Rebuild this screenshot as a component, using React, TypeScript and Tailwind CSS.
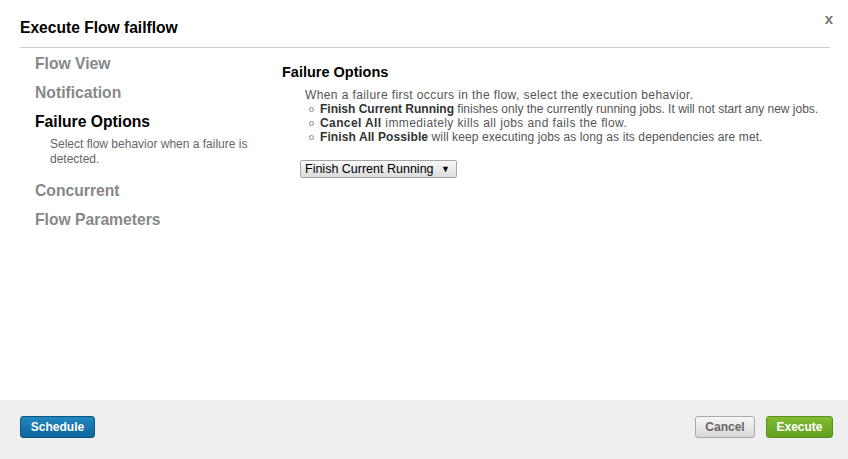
import React from "react";

const font = { fontFamily: '"Liberation Sans", Arial, Helvetica, sans-serif' };

function NavItem({ label, active }: { label: string; active?: boolean }) {
  return (
    <div
      className={`h-[20px] leading-[20px] text-[15.7px] font-bold whitespace-nowrap ${
        active ? "text-black" : "text-[#888888]"
      }`}
    >
      {label}
    </div>
  );
}

function Bullet({ bold, rest, track }: { bold: string; rest: string; track: string }) {
  return (
    <li className="flex items-center h-[14px] whitespace-nowrap">
      <span className="ml-[4px] mr-[6px] inline-block w-[5px] h-[5px] rounded-full border border-[#888]" />
      <span className={track}>
        <b className="font-bold text-[#333]">{bold}</b> {rest}
      </span>
    </li>
  );
}

export default function App() {
  return (
    <div
      className="w-[848px] h-[459px] bg-white flex flex-col relative overflow-hidden"
      style={font}
    >
      <button className="absolute top-[11px] right-[15px] text-[#777] font-bold text-[15px] leading-[16px]">
        x
      </button>

      {/* Header */}
      <div className="ml-[20px] mr-[18px] pt-[18px] pb-[9px] border-b border-[#cccccc]">
        <h4 className="text-[15.6px] leading-[20px] font-bold text-black">
          Execute Flow failflow
        </h4>
      </div>

      {/* Body */}
      <div className="flex-1 flex pl-[20px]">
        <div className="w-[262px] shrink-0 pl-[15px] pt-[6px]">
          <div className="flex flex-col gap-[9px]">
            <NavItem label="Flow View" />
            <NavItem label="Notification" />
            <div>
              <NavItem label="Failure Options" active />
              <p className="mt-[5px] pl-[15px] pr-[4px] text-[12px] leading-[15px] text-[#666666]">
                Select flow behavior when a failure is detected.
              </p>
            </div>
          </div>
          <div className="flex flex-col gap-[9px] mt-[14px]">
            <NavItem label="Concurrent" />
            <NavItem label="Flow Parameters" />
          </div>
        </div>

        <div className="flex-1 pt-[15px]">
          <h3 className="text-[14.5px] leading-[18px] font-bold text-black">
            Failure Options
          </h3>
          <div className="mt-[7px] pl-[23px] text-[12px] leading-[14px] text-[#555555]">
            <p className="whitespace-nowrap tracking-[0.4px]">
              When a failure first occurs in the flow, select the execution behavior.
            </p>
            <ul>
              <Bullet
                track=""
                bold="Finish Current Running"
                rest="finishes only the currently running jobs. It will not start any new jobs."
              />
              <Bullet
                track="tracking-[0.4px]"
                bold="Cancel All"
                rest="immediately kills all jobs and fails the flow."
              />
              <Bullet
                track="tracking-[0.1px]"
                bold="Finish All Possible"
                rest="will keep executing jobs as long as its dependencies are met."
              />
            </ul>
          </div>
          <div className="mt-[16px] ml-[18px]">
            <div className="w-[157px] h-[18px] border border-[#a6a6a6] rounded-[2px] bg-gradient-to-b from-[#f8f8f8] to-[#dcdcdc] flex items-center justify-between pl-[4px] pr-[6px] text-[12.5px] text-black">
              <span className="whitespace-nowrap leading-[16px]">Finish Current Running</span>
              <span className="text-[9px] leading-[9px]">▼</span>
            </div>
          </div>
        </div>
      </div>

      {/* Footer */}
      <div className="h-[59px] bg-[#efefef] flex items-start justify-between pt-[16px] pl-[20px] pr-[15px]">
        <button className="h-[22px] w-[75px] rounded-[3px] border border-[#0b5585] bg-gradient-to-b from-[#2287c0] to-[#0c659b] text-white text-[12px] font-bold leading-[20px]">
          Schedule
        </button>
        <div className="flex gap-[11px]">
          <button className="h-[22px] w-[60px] rounded-[3px] border border-[#aaaaaa] bg-gradient-to-b from-[#f7f7f7] to-[#d8d8d8] text-[#666666] text-[12px] font-bold leading-[20px]">
            Cancel
          </button>
          <button className="h-[22px] w-[67px] rounded-[3px] border border-[#5a9020] bg-gradient-to-b from-[#82bd33] to-[#629f1e] text-white text-[12px] font-bold leading-[20px]">
            Execute
          </button>
        </div>
      </div>
    </div>
  );
}
